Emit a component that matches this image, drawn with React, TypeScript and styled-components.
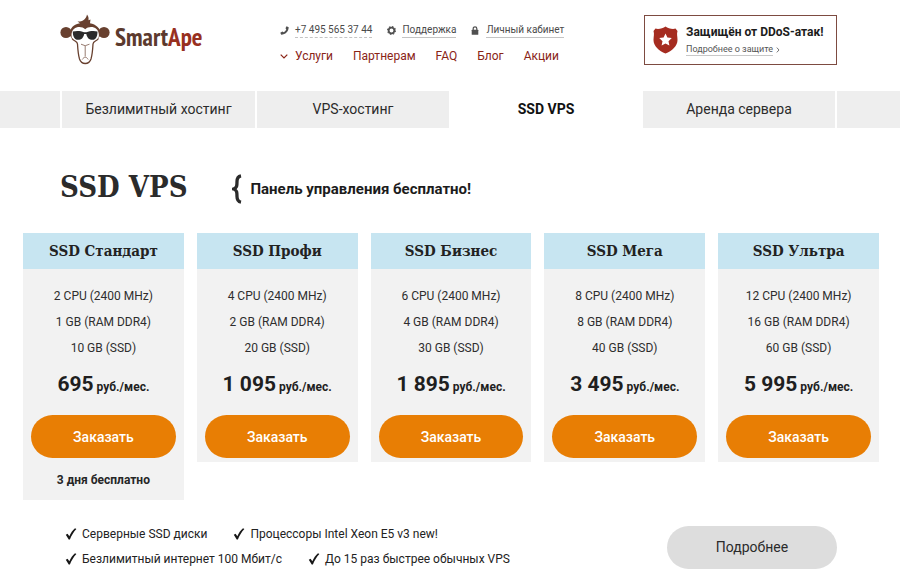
import React from "react";
import styled, { createGlobalStyle } from "styled-components";

const GlobalStyle = createGlobalStyle`
  * { box-sizing: border-box; }
  body {
    margin: 0;
    background: #fff;
    color: #262626;
    font-family: Roboto, "Liberation Sans", sans-serif;
    font-size: 13px;
    line-height: 20px;
  }
  a { color: inherit; text-decoration: none; }
  button { font: inherit; border: 0; cursor: pointer; }
  ul { list-style: none; margin: 0; padding: 0; }
`;

const slab = `"DejaVu Serif Condensed", "DejaVu Serif", serif`;

const Header = styled.header`
  display: flex;
  align-items: flex-start;
  height: 91px;
  padding: 14px 7% 0 60px;
`;

const Brand = styled.a`
  display: flex;
  align-items: flex-start;
  gap: 4px;
  width: 219px;
  flex-shrink: 0;
`;

const BrandName = styled.span`
  font-family: "Liberation Sans Narrow", "PT Sans Narrow", "Open Sans", sans-serif;
  font-size: 25px;
  font-weight: 700;
  line-height: 46px;
  color: #5c3a2e;
`;

const BrandAccent = styled.span`
  color: #98301f;
`;

const HeaderLinks = styled.div`
  flex: 1;
`;

const ContactRow = styled.div`
  display: flex;
  gap: 14px;
  margin-top: 9px;
`;

const Contact = styled.a`
  display: flex;
  align-items: center;
  gap: 6px;
  font-size: 10px;
  line-height: 14px;
  color: #4a4a4a;
  white-space: nowrap;
`;

const ContactText = styled.span<{ $dashed?: boolean }>`
  border-bottom: 1px ${(p) => (p.$dashed ? "dashed" : "solid")} #c4c4c4;
`;

const IconSlot = styled.span`
  display: flex;
  justify-content: center;
  width: 10px;
`;

const MainNav = styled.nav`
  display: flex;
  align-items: center;
  gap: 20px;
  margin-top: 8px;
  font-size: 12px;
  line-height: 20px;
  color: #8a2416;
  white-space: nowrap;
`;

const NavLink = styled.a`
  display: flex;
  align-items: center;
  gap: 6px;
`;

const Shield = styled.aside`
  display: flex;
  align-items: center;
  gap: 8px;
  width: 193px;
  height: 50px;
  margin-top: 1px;
  padding-left: 8px;
  border: 1px solid #7d4b41;
`;

const ShieldTitle = styled.div`
  font-size: 12px;
  font-weight: 700;
  line-height: 17px;
  color: #1c1c1c;
  white-space: nowrap;
`;

const ShieldLink = styled.a`
  display: flex;
  align-items: center;
  gap: 3px;
  margin-top: 3px;
  font-size: 9px;
  line-height: 11px;
  color: #555;
`;

const Underlined = styled.span`
  border-bottom: 1px solid #c8c8c8;
`;

const Tabs = styled.nav`
  display: grid;
  grid-template-columns: 60fr 193fr 192fr 190fr 192fr 63fr;
  gap: 2px;
`;

const Tab = styled.a<{ $active?: boolean }>`
  padding-bottom: 1px;
  text-align: center;
  font-size: 14px;
  line-height: 36px;
  font-weight: ${(p) => (p.$active ? 700 : 400)};
  color: ${(p) => (p.$active ? "#111" : "#2b2b2b")};
  background: ${(p) => (p.$active ? "#fff" : "#eee")};
`;

const TabFiller = styled.span`
  background: #eee;
`;

const TitleRow = styled.div`
  display: flex;
  align-items: center;
  gap: 45px;
  padding: 39px 60px 0;
`;

const Title = styled.h1`
  margin: 0;
  font-family: ${slab};
  font-size: 29px;
  font-weight: 700;
  line-height: 40px;
  color: #2b2b2b;
`;

const Slogan = styled.p`
  display: flex;
  align-items: center;
  gap: 8px;
  margin: 4px 0 0;
  font-size: 15px;
  font-weight: 700;
  color: #1c1c1c;
`;

const Plans = styled.section`
  display: grid;
  grid-template-columns: repeat(5, 1fr);
  align-items: start;
  gap: 13px;
  padding: 26px 21px 0 23px;
`;

const Card = styled.article`
  display: flex;
  flex-direction: column;
  background: #f2f2f2;
  text-align: center;
`;

const CardTitle = styled.h2`
  margin: 0;
  font-family: ${slab};
  font-size: 15px;
  font-weight: 700;
  line-height: 36px;
  color: #222;
  background: #c7e5f1;
`;

const Specs = styled.ul`
  padding-top: 14px;
  font-size: 12px;
  line-height: 26px;
  color: #2e2e2e;
`;

const Price = styled.p`
  margin: 9px 0 0;
  font-size: 12px;
  font-weight: 700;
  line-height: 28px;
  color: #1f1f1f;
`;

const Amount = styled.span`
  font-size: 21px;
`;

const OrderButton = styled.button`
  height: 43px;
  margin: 14px 8px 4px;
  border-radius: 22px;
  background: #e87e04;
  color: #fff;
  && { font-size: 14px; font-weight: 500; }
`;

const Trial = styled.p`
  margin: 8px 0 10px;
  font-size: 12px;
  font-weight: 700;
`;

const Footer = styled.footer`
  display: flex;
  justify-content: space-between;
  align-items: center;
  padding: 22px 7% 0 65px;
`;

const FeatureLine = styled.ul`
  display: flex;
  gap: 26px;
  line-height: 25px;
  font-size: 12px;
  color: #222;
`;

const Feature = styled.li`
  display: flex;
  align-items: center;
  gap: 5px;
  white-space: nowrap;
`;

const MoreButton = styled.button`
  width: 170px;
  height: 43px;
  border-radius: 22px;
  background: #ddd;
  color: #2b2b2b;
  && { font-size: 14px; }
`;

const ApeLogo = () => (
  <svg width="51" height="51" viewBox="0 0 51 51" aria-hidden="true">
    <circle cx="6" cy="18.5" r="5.6" fill="#68402f" />
    <circle cx="44" cy="18.5" r="5.6" fill="#68402f" />
    <path d="M9.500 21C9.500 14 14 10 20 9.200L17.500 7.500C21 8 26 6 27 .5C29 3 28.500 4.800 28.500 6.300L30.500 5.500L30 9.200C36 10.400 40.800 14 40.800 21L37 26H13Z" fill="#68402f" />
    <path d="M11.500 21C11.500 12.500 21 11 25.200 15.200C29.500 11 38.900 12.500 38.900 21C38.900 26 35.500 26.500 33 28C32.500 33 32.500 40 31 45C29 51 21.500 51 19.500 45C18 40 18 33 17.500 28C15 26.500 11.500 26 11.500 21Z" fill="#fff" />
    <path d="M12 24.500C14 27.500 17.300 27 17.500 30C17.800 35 18 40 19.500 45C21.500 51 29 51 31 45C32.500 40 32.700 35 33 30C33.200 27 36.500 27.500 38.500 24.500" fill="none" stroke="#68402f" strokeWidth="1.300" />
    <path d="M21 30.200L25.200 31.700L29.500 30.200M25.200 32V42.500M22.300 45.500C24 42.500 26.500 42.500 28.200 45.500" fill="none" stroke="#8b6c60" strokeWidth=".9" />
    <path d="M12.800 17.500C17 16.500 21 17 24 18.200H26.500C29.500 17 34 16.500 37.500 17.500C37.500 22.500 36 25.800 32.500 25.800C29 25.800 27.200 24 26.300 20H24.200C23.300 24 21.500 25.800 18 25.800C14.500 25.800 12.800 22.500 12.800 17.500Z" fill="#2b2a2a" />
  </svg>
);

const PhoneIcon = () => (
  <svg width="9" height="9" viewBox="0 0 9 9" aria-hidden="true">
    <path d="M6.500.300L8.700 1.200C8.500 5.500 5.500 8.500 1.200 8.700L.300 6.700L2.400 5.400L3.600 6.300C4.900 5.700 5.800 4.700 6.300 3.500L5.500 2.200Z" fill="#505050" />
  </svg>
);

const GearIcon = () => (
  <svg width="9" height="9" viewBox="0 0 9 9" aria-hidden="true">
    <circle cx="4.500" cy="4.500" r="2.800" fill="none" stroke="#505050" strokeWidth="1.700" />
    <circle cx="4.500" cy="4.500" r="3.900" fill="none" stroke="#505050" strokeWidth="1.200" strokeDasharray="1.530 1.530" />
  </svg>
);

const LockIcon = () => (
  <svg width="8" height="9" viewBox="0 0 8 9" aria-hidden="true">
    <rect x=".7" y="3.800" width="6.600" height="5" rx=".5" fill="#505050" />
    <path d="M2.200 4V2.600C2.200.300 5.800.300 5.800 2.600V4" fill="none" stroke="#505050" strokeWidth="1.200" />
  </svg>
);

const ChevronDown = () => (
  <svg width="8" height="5" viewBox="0 0 8 5" aria-hidden="true">
    <path d="M.7.700L4 4L7.300.700" fill="none" stroke="#8a2416" strokeWidth="1.200" />
  </svg>
);

const ChevronRight = () => (
  <svg width="4" height="6" viewBox="0 0 4 6" aria-hidden="true">
    <path d="M.8.600L3 3L.8 5.400" fill="none" stroke="#666" strokeWidth=".9" />
  </svg>
);

const ShieldIcon = () => (
  <svg width="25" height="28" viewBox="0 0 25 28" aria-hidden="true">
    <path d="M12.500.500C15 2.500 20 3.500 22.500 2.500L24.500 5C23.500 8 24.500 10.500 24.500 14C24.500 20 19 25 12.500 27.500C6 25 .5 20 .5 14C.5 10.500 1.500 8 .5 5L2.500 2.500C5 3.500 10 2.500 12.500.500Z" fill="#a52c20" />
    <path d="M12.500 7.500L14.400 11.600L18.800 12.100L15.500 15.200L16.400 19.600L12.500 17.400L8.600 19.600L9.500 15.200L6.200 12.100L10.600 11.600Z" fill="#fff" />
  </svg>
);

const BraceIcon = () => (
  <svg width="10" height="30" viewBox="0 0 10 30" aria-hidden="true">
    <path d="M9 1.800C5.500 2.500 5 4.500 5 7.500C5 11.500 5 14 1.500 15C5 16 5 18.500 5 22.500C5 25.500 5.500 27.500 9 28.200" fill="none" stroke="#2b2b2b" strokeWidth="3.300" />
  </svg>
);

const CheckIcon = () => (
  <svg width="12" height="14" viewBox="0 0 12 14" aria-hidden="true">
    <path d="M.8 6.800L2.600 5.800L4.300 8.300C5.800 5 7.500 2.500 10 .3L11.400 1C8.500 4 6.500 7.500 4.900 11.500H3.700Z" fill="#171717" />
  </svg>
);

interface Plan {
  name: string;
  cpu: number;
  ram: number;
  disk: number;
  price: string;
  trial?: string;
}

const plans: Plan[] = [
  { name: "SSD Стандарт", cpu: 2, ram: 1, disk: 10, price: "695", trial: "3 дня бесплатно" },
  { name: "SSD Профи", cpu: 4, ram: 2, disk: 20, price: "1 095" },
  { name: "SSD Бизнес", cpu: 6, ram: 4, disk: 30, price: "1 895" },
  { name: "SSD Мега", cpu: 8, ram: 8, disk: 40, price: "3 495" },
  { name: "SSD Ультра", cpu: 12, ram: 16, disk: 60, price: "5 995" },
];

const featureLines = [
  ["Серверные SSD диски", "Процессоры Intel Xeon E5 v3 new!"],
  ["Безлимитный интернет 100 Мбит/с", "До 15 раз быстрее обычных VPS"],
];

export default function App() {
  return (
    <>
      <GlobalStyle />
      <Header>
        <Brand href="#">
          <ApeLogo />
          <BrandName>
            Smart<BrandAccent>Ape</BrandAccent>
          </BrandName>
        </Brand>
        <HeaderLinks>
          <ContactRow>
            <Contact href="tel:+74955653744">
              <IconSlot><PhoneIcon /></IconSlot>
              <ContactText $dashed>+7 495 565 37 44</ContactText>
            </Contact>
            <Contact href="#support">
              <IconSlot><GearIcon /></IconSlot>
              <ContactText>Поддержка</ContactText>
            </Contact>
            <Contact href="#account">
              <IconSlot><LockIcon /></IconSlot>
              <ContactText>Личный кабинет</ContactText>
            </Contact>
          </ContactRow>
          <MainNav>
            <NavLink href="#services">
              <IconSlot><ChevronDown /></IconSlot>
              Услуги
            </NavLink>
            <NavLink href="#partners">Партнерам</NavLink>
            <NavLink href="#faq">FAQ</NavLink>
            <NavLink href="#blog">Блог</NavLink>
            <NavLink href="#offers">Акции</NavLink>
          </MainNav>
        </HeaderLinks>
        <Shield>
          <ShieldIcon />
          <div>
            <ShieldTitle>Защищён от DDoS-атак!</ShieldTitle>
            <ShieldLink href="#ddos">
              <Underlined>Подробнее о защите</Underlined>
              <ChevronRight />
            </ShieldLink>
          </div>
        </Shield>
      </Header>
      <Tabs>
        <TabFiller />
        <Tab href="#hosting">Безлимитный хостинг</Tab>
        <Tab href="#vps">VPS-хостинг</Tab>
        <Tab href="#ssd" $active aria-current="page">SSD VPS</Tab>
        <Tab href="#servers">Аренда сервера</Tab>
        <TabFiller />
      </Tabs>
      <main>
        <TitleRow>
          <Title>SSD VPS</Title>
          <Slogan>
            <BraceIcon />
            Панель управления бесплатно!
          </Slogan>
        </TitleRow>
        <Plans>
          {plans.map((plan) => (
            <Card key={plan.name}>
              <CardTitle>{plan.name}</CardTitle>
              <Specs>
                <li>{plan.cpu} CPU (2400 MHz)</li>
                <li>{plan.ram} GB (RAM DDR4)</li>
                <li>{plan.disk} GB (SSD)</li>
              </Specs>
              <Price>
                <Amount>{plan.price}</Amount> руб./мес.
              </Price>
              <OrderButton type="button">Заказать</OrderButton>
              {plan.trial && <Trial>{plan.trial}</Trial>}
            </Card>
          ))}
        </Plans>
      </main>
      <Footer>
        <div>
          {featureLines.map((line) => (
            <FeatureLine key={line[0]}>
              {line.map((text) => (
                <Feature key={text}>
                  <CheckIcon />
                  {text}
                </Feature>
              ))}
            </FeatureLine>
          ))}
        </div>
        <MoreButton type="button">Подробнее</MoreButton>
      </Footer>
    </>
  );
}
